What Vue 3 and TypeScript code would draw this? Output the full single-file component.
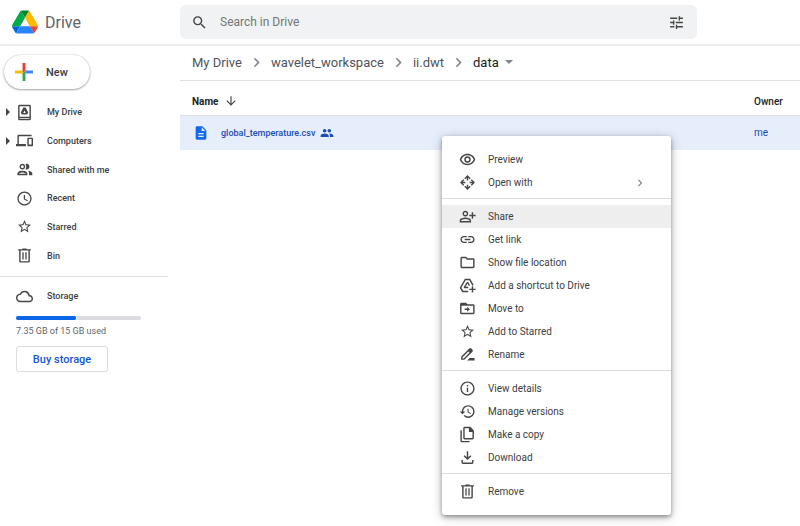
<script setup lang="ts">
import { h, ref, type FunctionalComponent } from 'vue'

const paths = {
  drive:
    'M19 1H5a2 2 0 0 0-2 2v18a2 2 0 0 0 2 2h14a2 2 0 0 0 2-2V3a2 2 0 0 0-2-2zm0 20H5v-1h14zm0-3H5V3h14zM13.500 5h-3L6.700 11.900l1.700 2.900h7.200l1.700-2.900zM10.200 12.600l1.800-3.300 1.800 3.300z',
  computers:
    'M4 6h18V4H4c-1.100 0-2 .9-2 2v11H0v3h14v-3H4V6zm19 2h-6c-.55 0-1 .45-1 1v10c0 .55.45 1 1 1h6c.55 0 1-.45 1-1V9c0-.55-.45-1-1-1zm-1 9.500h-4V10h4z',
  shared:
    'M9 13.750c-2.340 0-7 1.170-7 3.500V20h14v-2.750c0-2.330-4.660-3.500-7-3.500zM3.900 18c.7-.9 3-1.900 5.100-1.900s4.400 1 5.100 1.900zM9 12c2.200 0 4-1.800 4-4s-1.800-4-4-4-4 1.800-4 4 1.800 4 4 4zm0-6c1.100 0 2 .9 2 2s-.9 2-2 2-2-.9-2-2 .9-2 2-2zm7.500 7.900c1.200.8 1.900 2 1.900 3.400V20H23v-2.750c0-2-3.600-3.200-6.500-3.350zM15 12c2.200 0 4-1.800 4-4s-1.800-4-4-4c-.6 0-1.200.1-1.700.4.6.900 1.100 2.200 1.100 3.600s-.4 2.700-1.100 3.600c.5.2 1.100.4 1.700.4z',
  recent:
    'M12 2C6.500 2 2 6.500 2 12s4.500 10 10 10 10-4.500 10-10S17.500 2 12 2zm0 18.200a8.200 8.200 0 1 1 0-16.400 8.200 8.200 0 0 1 0 16.400zM12.700 7H11v6l4.800 3 .9-1.400-4-2.400z',
  star:
    'M22 9.240l-7.190-.62L12 2 9.190 8.630 2 9.240l5.460 4.730L5.820 21 12 17.270 18.180 21l-1.630-7.030L22 9.240zM12 15.400l-3.760 2.270 1-4.280-3.320-2.880 4.380-.38L12 6.100l1.710 4.040 4.380.38-3.320 2.880 1 4.280L12 15.400z',
  bin:
    'M15 3V2H9v1H3v2h1.500v15c0 1.100.9 2 2 2h11c1.100 0 2-.9 2-2V5H21V3zm2.500 17h-11V5h11zM9 7.500h1.800v10H9zm4.200 0H15v10h-1.800z',
  cloud:
    'M19.350 10.040A7.490 7.490 0 0 0 12 4C9.110 4 6.600 5.640 5.350 8.040A5.994 5.994 0 0 0 0 14c0 3.310 2.690 6 6 6h13c2.760 0 5-2.240 5-5 0-2.640-2.050-4.780-4.650-4.960zM19 18H6c-2.210 0-4-1.790-4-4 0-2.050 1.530-3.760 3.560-3.970l1.070-.11.5-.95A5.469 5.469 0 0 1 12 6c2.620 0 4.880 1.860 5.390 4.430l.3 1.500 1.530.11A2.980 2.980 0 0 1 22 15c0 1.650-1.350 3-3 3z',
  search:
    'M15.500 14h-.79l-.28-.27A6.471 6.471 0 0 0 16 9.500 6.500 6.500 0 1 0 9.500 16c1.610 0 3.090-.59 4.230-1.570l.27.28v.79l5 4.990L20.490 19l-4.990-5zm-6 0C7.010 14 5 11.990 5 9.500S7.010 5 9.500 5 14 7.010 14 9.500 11.990 14 9.500 14z',
  tune:
    'M3 17v2h6v-2H3zM3 5v2h10V5H3zm10 16v-2h8v-2h-8v-2h-2v6h2zM7 9v2H3v2h4v2h2V9H7zm14 4v-2H11v2h10zm-6-4h2V7h4V5h-4V3h-2v6z',
  chevron: 'M8.590 16.590L13.170 12 8.590 7.410 10 6l6 6-6 6z',
  sort: 'M20 12l-1.410-1.410L13 16.170V4h-2v12.170l-5.580-5.590L4 12l8 8z',
  file:
    'M14 2H6c-1.100 0-1.990.9-1.990 2L4 20c0 1.100.89 2 1.990 2H18c1.100 0 2-.9 2-2V8l-6-6zm2 16H8v-2h8v2zm0-4H8v-2h8v2zm-3-5V3.500L18.500 9H13z',
  people:
    'M16 11c1.660 0 2.990-1.340 2.990-3S17.660 5 16 5s-3 1.340-3 3 1.340 3 3 3zm-8 0c1.660 0 2.990-1.340 2.990-3S9.660 5 8 5 5 6.340 5 8s1.340 3 3 3zm0 2c-2.330 0-7 1.170-7 3.500V19h14v-2.500c0-2.330-4.670-3.500-7-3.500zm8 0c-.29 0-.62.020-.97.050 1.160.84 1.970 1.970 1.970 3.450V19h6v-2.500c0-2.330-4.670-3.500-7-3.500z',
  eye:
    'M12 4C7 4 2.730 7.110 1 12c1.730 4.890 6 8 11 8s9.270-3.110 11-8c-1.730-4.890-6-8-11-8zm0 14c-3.800 0-7.200-2.200-8.800-6C4.800 8.200 8.200 6 12 6s7.200 2.200 8.800 6c-1.600 3.800-5 6-8.800 6zm0-10.500a4.500 4.500 0 1 0 0 9 4.500 4.500 0 0 0 0-9zm0 7a2.500 2.500 0 1 1 0-5 2.500 2.500 0 0 1 0 5z',
  open:
    'M12 1.500L7.500 6l1.400 1.400L11 5.300V9h2V5.300l2.100 2.100L16.500 6zM1.500 12L6 16.500l1.400-1.400L5.300 13H9v-2H5.300l2.100-2.100L6 7.500zM22.500 12L18 7.500l-1.400 1.400 2.100 2.100H15v2h3.700l-2.100 2.100 1.400 1.400zM12 22.500l4.500-4.500-1.400-1.400-2.100 2.100V15h-2v3.700l-2.100-2.100L7.500 18z',
  share:
    'M9 12c2.200 0 4-1.800 4-4s-1.800-4-4-4-4 1.800-4 4 1.800 4 4 4zm0-6c1.100 0 2 .9 2 2s-.9 2-2 2-2-.9-2-2 .9-2 2-2zm0 7.500c-2.700 0-8 1.300-8 4V20.500h16v-3c0-2.700-5.300-4-8-4zm6 5H3v-.9c.2-.7 3.300-2.100 6-2.100s5.800 1.400 6 2.100zM20 9.500V6h-2v3.500h-3.500v2H18V15h2v-3.500h3.500v-2z',
  link:
    'M3.900 12c0-1.710 1.390-3.100 3.100-3.100h4V7H7c-2.760 0-5 2.240-5 5s2.240 5 5 5h4v-1.900H7c-1.710 0-3.100-1.390-3.100-3.100zM8 13h8v-2H8v2zm9-6h-4v1.900h4c1.710 0 3.100 1.390 3.100 3.100s-1.390 3.100-3.100 3.100h-4V17h4c2.760 0 5-2.240 5-5s-2.240-5-5-5z',
  folder:
    'M9.170 6l2 2H20v10H4V6h5.170M10 4H4c-1.100 0-1.990.9-1.990 2L2 18c0 1.100.9 2 2 2h16c1.100 0 2-.9 2-2V8c0-1.100-.9-2-2-2h-8l-2-2z',
  shortcut:
    'M8.300 2.500h7.400l5.100 8.800-1.900.9L14.600 4.500H9.400L3.300 15l2.500 4.500H13v2H4.600L1 15zM11.200 7h1.700l2.700 4.800-1.600.9-2-3.500-2.600 4.600H13v2H7.500l-.9-1.500zM18 13h2v3.500h3.500v2H20V22h-2v-3.500h-3.500v-2H18z',
  move:
    'M20 6h-8l-2-2H3.500C2.400 4 1.500 4.900 1.500 6v12c0 1.100.9 2 2 2H20c1.100 0 2-.9 2-2V8c0-1.100-.9-2-2-2zm0 12H3.500V8H20zM11.500 16.500L15.500 13l-4-3.500v2.500H8v2h3.500z',
  rename:
    'M18.400 4.600l-1-1a2.100 2.100 0 0 0-3 0L3 15v4.500h4.500L19 8c.8-.8.8-2 0-2.800zM6.700 17.500H5v-1.700L13.200 7.600l1.700 1.700zM11.500 20.500L15 17h7v3.500z',
  info:
    'M11 7h2v2h-2zm0 4h2v6h-2zm1-9C6.480 2 2 6.480 2 12s4.480 10 10 10 10-4.480 10-10S17.520 2 12 2zm0 18c-4.410 0-8-3.590-8-8s3.590-8 8-8 8 3.590 8 8-3.590 8-8 8z',
  history:
    'M13 3c-4.970 0-9 4.030-9 9H1l3.890 3.890.070.14L9 12H6c0-3.870 3.130-7 7-7s7 3.130 7 7-3.130 7-7 7c-1.930 0-3.680-.79-4.940-2.060l-1.420 1.420A8.954 8.954 0 0 0 13 21a9 9 0 0 0 0-18zm-1 5v5l4.280 2.540.72-1.210-3.500-2.080V8H12z',
  copy:
    'M16 1H8C6.900 1 6 1.900 6 3v14c0 1.100.9 2 2 2h11c1.100 0 2-.9 2-2V6.500zm3 16H8V3h6v5.500h5zM2 6v15c0 1.100.9 2 2 2h11v-2H4V6z',
  download:
    'M13 3v8.700l3-3 1.400 1.400L12 15.500 6.600 10.100 8 8.700l3 3V3zM3.500 15.500h2V19h13v-3.500h2V19c0 1.100-.9 2-2 2h-13c-1.100 0-2-.9-2-2z',
}

type IconName = keyof typeof paths

const Icon: FunctionalComponent<{ name: IconName }> = (props) =>
  h(
    'svg',
    {
      class: 'icon',
      viewBox: props.name === 'star' ? '-1 -1 26 26' : '0 0 24 24',
      'aria-hidden': 'true',
    },
    [h('path', { d: paths[props.name], 'fill-rule': 'evenodd' })],
  )
Icon.props = ['name']

interface Entry {
  icon: IconName
  label: string
  nested?: boolean
}

const places: Entry[] = [
  { icon: 'drive', label: 'My Drive', nested: true },
  { icon: 'computers', label: 'Computers', nested: true },
  { icon: 'shared', label: 'Shared with me' },
  { icon: 'recent', label: 'Recent' },
  { icon: 'star', label: 'Starred' },
  { icon: 'bin', label: 'Bin' },
]

const crumbs = ['My Drive', 'wavelet_workspace', 'ii.dwt']

const menu: Entry[][] = [
  [
    { icon: 'eye', label: 'Preview' },
    { icon: 'open', label: 'Open with', nested: true },
  ],
  [
    { icon: 'share', label: 'Share' },
    { icon: 'link', label: 'Get link' },
    { icon: 'folder', label: 'Show file location' },
    { icon: 'shortcut', label: 'Add a shortcut to Drive' },
    { icon: 'move', label: 'Move to' },
    { icon: 'star', label: 'Add to Starred' },
    { icon: 'rename', label: 'Rename' },
  ],
  [
    { icon: 'info', label: 'View details' },
    { icon: 'history', label: 'Manage versions' },
    { icon: 'copy', label: 'Make a copy' },
    { icon: 'download', label: 'Download' },
  ],
  [{ icon: 'bin', label: 'Remove' }],
]

const active = ref('Share')
const query = ref('')
const storage = { used: 7.35, total: 15 }
</script>

<template>
  <div class="app">
    <header class="topbar">
      <a class="brand" href="#">
        <svg class="logo" viewBox="0 0 87.3 78" aria-hidden="true">
          <path fill="#0066da" d="m6.600 66.850 3.850 6.650c.8 1.400 1.950 2.500 3.300 3.300l13.750-23.800h-27.500c0 1.550.4 3.100 1.200 4.500z" />
          <path fill="#00ac47" d="m43.650 25-13.750-23.800c-1.350.8-2.500 1.900-3.300 3.300l-25.400 44a9.060 9.060 0 0 0 -1.200 4.500h27.500z" />
          <path fill="#ea4335" d="m73.550 76.800c1.350-.8 2.500-1.900 3.300-3.300l1.600-2.750 7.650-13.250c.8-1.400 1.200-2.950 1.200-4.500h-27.500l5.850 11.500z" />
          <path fill="#00832d" d="m43.650 25 13.750-23.800c-1.350-.8-2.900-1.200-4.500-1.200h-18.500c-1.600 0-3.150.45-4.500 1.200z" />
          <path fill="#2684fc" d="m59.800 53h-32.300l-13.750 23.800c1.350.8 2.900 1.200 4.500 1.200h50.800c1.600 0 3.150-.45 4.500-1.200z" />
          <path fill="#ffba00" d="m73.400 26.500-12.700-22c-.8-1.400-1.950-2.500-3.300-3.300l-13.750 23.800 16.150 28h27.450c0-1.550-.4-3.100-1.200-4.500z" />
        </svg>
        <span>Drive</span>
      </a>
      <form class="search" role="search" @submit.prevent>
        <button type="submit" aria-label="Search"><Icon name="search" /></button>
        <input v-model="query" type="text" placeholder="Search in Drive" aria-label="Search in Drive" />
        <button type="button" aria-label="Search options"><Icon name="tune" /></button>
      </form>
    </header>

    <div class="body">
      <aside class="sidebar">
        <button class="new" type="button">
          <svg class="plus" viewBox="0 0 18 18" aria-hidden="true">
            <path fill="#ea4335" d="M7.500 0h3v7.500l-3 3z" />
            <path fill="#fbbc04" d="M0 7.500h7.500v3H0z" />
            <path fill="#4285f4" d="M10.500 7.500H18v3h-7.500z" />
            <path fill="#34a853" d="M7.500 10.500l3-3V18h-3z" />
          </svg>
          <span>New</span>
        </button>

        <nav class="places">
          <a v-for="place in places" :key="place.label" class="place" href="#">
            <i class="expander" :class="{ shown: place.nested }"></i>
            <Icon :name="place.icon" />
            <span>{{ place.label }}</span>
          </a>
        </nav>

        <section class="storage">
          <a class="place" href="#">
            <i class="expander"></i>
            <Icon name="cloud" />
            <span>Storage</span>
          </a>
          <div class="meter">
            <div class="used" :style="{ width: (storage.used / storage.total) * 100 + '%' }"></div>
          </div>
          <p>{{ storage.used }} GB of {{ storage.total }} GB used</p>
          <button class="buy" type="button">Buy storage</button>
        </section>
      </aside>

      <main class="content">
        <nav class="crumbs">
          <template v-for="crumb in crumbs" :key="crumb">
            <a href="#">{{ crumb }}</a>
            <Icon name="chevron" />
          </template>
          <button class="current" type="button">data <i class="caret"></i></button>
        </nav>

        <table class="files">
          <thead>
            <tr>
              <th scope="col">
                <div class="cell">Name <Icon name="sort" /></div>
              </th>
              <th class="owner" scope="col">Owner</th>
            </tr>
          </thead>
          <tbody>
            <tr>
              <td>
                <div class="cell name">
                  <Icon name="file" class="doc" />
                  <span>global_temperature.csv</span>
                  <Icon name="people" class="people" />
                </div>
              </td>
              <td class="owner">me</td>
            </tr>
          </tbody>
        </table>
      </main>
    </div>

    <div class="menu" role="menu">
      <div v-for="(group, index) in menu" :key="index" class="group">
        <button
          v-for="item in group"
          :key="item.label"
          class="item"
          :class="{ active: item.label === active }"
          type="button"
          role="menuitem"
          @mouseenter="active = item.label"
        >
          <Icon :name="item.icon" />
          <span>{{ item.label }}</span>
          <Icon v-if="item.nested" name="chevron" class="more" />
        </button>
      </div>
    </div>
  </div>
</template>

<style>
body {
  background: #fff;
}
</style>

<style scoped>
.app {
  position: relative;
  min-height: 100vh;
  overflow: hidden;
  color: #3c4043;
  font-family: Roboto, 'Liberation Sans', sans-serif;
  font-size: 10px;
}

.app *,
.app {
  box-sizing: border-box;
}

a {
  color: inherit;
  text-decoration: none;
}

button {
  padding: 0;
  border: 0;
  background: none;
  color: inherit;
  font: inherit;
  cursor: pointer;
}

.icon {
  flex: none;
  width: 17px;
  height: 17px;
  fill: #444746;
}

.topbar {
  display: flex;
  align-items: center;
  height: 46px;
  padding: 0 103px 0 12px;
  border-bottom: 2px solid #ececee;
}

.brand {
  display: flex;
  flex: none;
  align-items: center;
  gap: 7px;
  width: 168px;
  color: #5f6368;
  font-size: 16px;
}

.logo {
  width: 26px;
  height: 24px;
}

.search {
  display: flex;
  flex: 1;
  align-items: center;
  gap: 12px;
  height: 34px;
  padding: 0 12px 0 11px;
  border-radius: 6px;
  background: #f0f2f3;
}

.search button {
  display: flex;
}

.search input {
  flex: 1;
  min-width: 0;
  padding: 0;
  border: 0;
  outline: 0;
  background: none;
  color: #3c4043;
  font: inherit;
  font-size: 12px;
}

.search input::placeholder {
  color: #747775;
  opacity: 1;
}

.body {
  display: flex;
}

.sidebar {
  flex: none;
  width: 168px;
  padding-top: 9px;
}

.new {
  display: flex;
  align-items: center;
  gap: 13px;
  width: 86px;
  height: 34px;
  margin-left: 4px;
  padding-left: 11px;
  border-radius: 17px;
  box-shadow: 0 1px 2px rgba(60, 64, 67, 0.4), 0 0 2px rgba(60, 64, 67, 0.3);
  font-size: 11px;
  font-weight: 500;
}

.plus {
  width: 18px;
  height: 18px;
}

.places {
  display: grid;
  grid-auto-rows: 1fr;
  height: 172px;
  margin-top: 9px;
}

.place {
  display: flex;
  align-items: center;
  font-size: 9px;
  font-weight: 500;
}

.place .icon {
  margin-right: 14px;
}

.expander {
  width: 10px;
  margin-right: 6px;
}

.expander.shown::before {
  content: '';
  display: block;
  width: 0;
  margin-left: 6px;
  border: 4px solid transparent;
  border-right: 0;
  border-left-color: #444746;
}

.storage {
  margin-top: 6px;
  padding-top: 8px;
  border-top: 1px solid #e0e0e0;
}

.storage .place {
  height: 22px;
}

.meter {
  width: 125px;
  height: 4px;
  margin: 9px 0 0 16px;
  border-radius: 2px;
  background: #dadce0;
}

.used {
  height: 100%;
  border-right: 1px solid #fff;
  border-radius: 2px;
  background: #0b66e8;
}

.storage p {
  margin: 5px 0 9px 16px;
  color: #5f6368;
  font-size: 9px;
  line-height: 12px;
}

.buy {
  display: block;
  width: 92px;
  height: 26px;
  margin-left: 16px;
  border: 1px solid #dadce0;
  border-radius: 3px;
  color: #1558d0;
  font-size: 11px;
  font-weight: 500;
}

.content {
  flex: 1;
  min-width: 0;
  margin-left: 12px;
}

.crumbs {
  display: flex;
  align-items: center;
  height: 35px;
  padding: 0 0 2px 12px;
  border-bottom: 1px solid #dfe1e5;
  color: #50545a;
  font-size: 13px;
}

.crumbs .icon {
  width: 19px;
  height: 19px;
  margin: 0 5px;
  fill: #80868b;
}

.current {
  display: flex;
  align-items: center;
  gap: 6px;
  color: #202124;
}

.caret {
  border: 4px solid transparent;
  border-top-color: #80868b;
  border-bottom: 0;
}

.files {
  width: 100%;
  border-collapse: collapse;
  table-layout: fixed;
}

.files th,
.files td {
  padding: 0 0 0 12px;
  text-align: left;
}

.files th {
  height: 34px;
  padding-top: 7px;
  border-bottom: 1px solid #dfe1e5;
  color: #202124;
  font-weight: 700;
}

.files td {
  height: 35px;
  background: #e6eefc;
  color: #1b4db3;
  font-weight: 500;
}

.files .owner {
  width: 46px;
  padding-left: 0;
  font-weight: 500;
}

.files td.owner {
  font-weight: 400;
}

.cell {
  display: flex;
  align-items: center;
  gap: 6px;
}

.cell .icon {
  width: 14px;
  height: 14px;
}

.name {
  gap: 5px;
  font-size: 9px;
}

.name .doc {
  width: 16px;
  height: 16px;
  margin: 0 7px 0 1px;
  fill: #1467e6;
}

.name .people {
  fill: #1b4db3;
}

.menu {
  position: absolute;
  top: 136px;
  left: 442px;
  width: 229px;
  padding: 12px 0;
  border-radius: 3px;
  background: #fff;
  box-shadow: 0 2px 4px rgba(0, 0, 0, 0.36), 0 2px 12px rgba(0, 0, 0, 0.22);
}

.group + .group {
  margin-top: 4px;
  padding-top: 6px;
  border-top: 1px solid #dadce0;
}

.item {
  display: flex;
  align-items: center;
  gap: 12px;
  width: 100%;
  height: 23px;
  padding: 0 24px 0 17px;
  text-align: left;
}

.item.active {
  background: #eee;
}

.item .more {
  width: 14px;
  height: 14px;
  margin-left: auto;
  fill: #80868b;
}
</style>
